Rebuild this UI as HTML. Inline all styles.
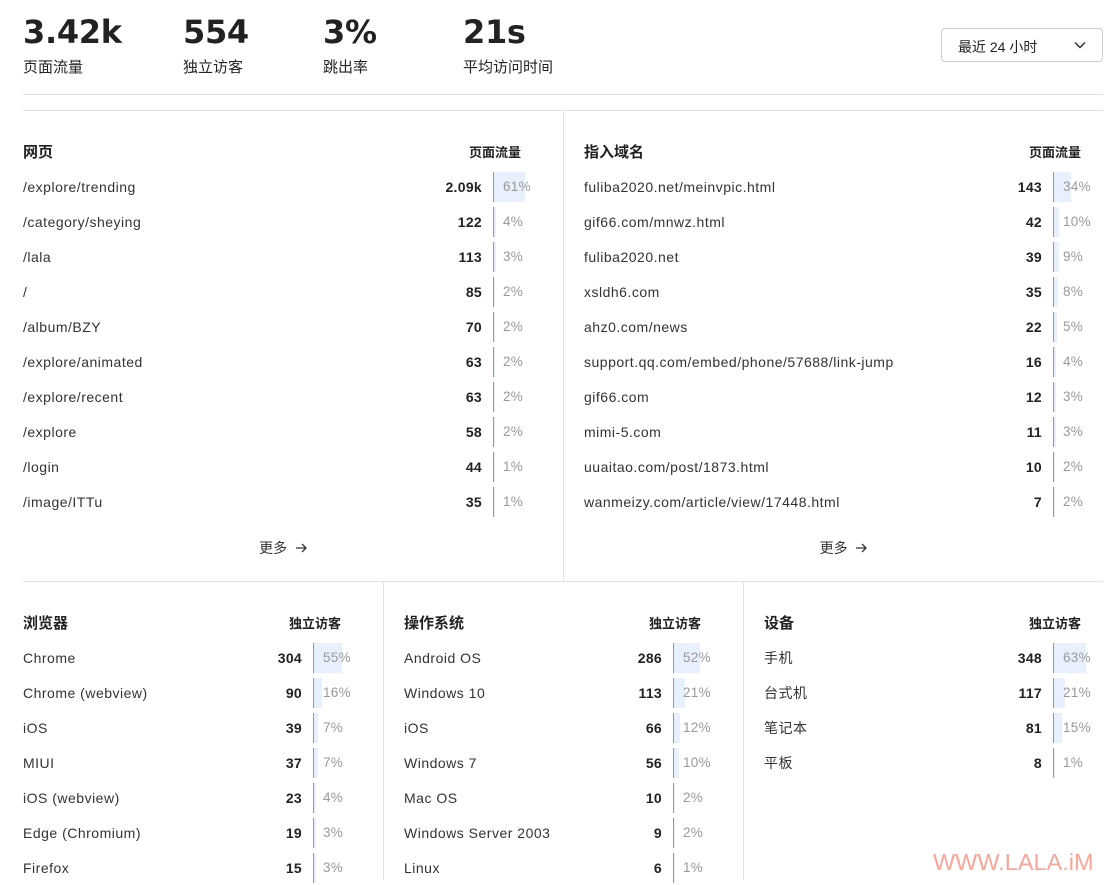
<!DOCTYPE html>
<html><head><meta charset="utf-8"><style>
*{box-sizing:border-box;margin:0;padding:0}
body{width:1109px;height:880px;overflow:hidden;background:#fff;font-family:"Liberation Sans","Noto Sans CJK SC",sans-serif;color:#333;position:relative}
.stat{position:absolute;top:10px}
.stat .v{font-family:"DejaVu Sans",sans-serif;font-size:32px;font-weight:bold;color:#222;line-height:44px;letter-spacing:-0.3px}
.stat .l{font-size:15px;color:#222;margin-top:2px}
.dd{position:absolute;left:941px;top:28px;width:162px;height:34px;border:1px solid #ccc;border-radius:4px;font-size:14px;color:#222;padding:8px 16px}
.dd svg{position:absolute;right:16px;top:12px}
.hr{position:absolute;left:23px;right:6px;height:1px;background:#e2e2e2}
.panel{position:absolute}
.panel h3{display:flex;font-size:15px;font-weight:bold;color:#222;height:20px;line-height:20px;margin-top:1px}
.panel h3 span:first-child{flex:1}
.panel h3 span:last-child{font-size:13px;margin-right:22px}
.row{display:flex;align-items:center;height:35px;font-size:14px;color:#333;letter-spacing:0.5px}
.row .n{flex:1;white-space:nowrap}
.row .c{font-weight:bold;color:#222;margin-right:11px;letter-spacing:0.3px}
.row .b{width:50px;height:30px;border-left:1px solid #999;position:relative;font-size:13.5px;color:#999;line-height:30px;padding-left:9px;letter-spacing:0.3px}
.row .b i{position:absolute;left:0;top:0;bottom:0;background:#e8f0fd;z-index:0}
.row .b s{position:relative;text-decoration:none}
.more{text-align:center;font-size:14px;color:#333;margin-top:19px}
.wm{position:absolute;left:933px;top:849px;font-size:23.5px;color:#f9a597}
</style></head><body>
<div class="stat" style="left:23px"><div class="v">3.42k</div><div class="l">页面流量</div></div>
<div class="stat" style="left:183px"><div class="v">554</div><div class="l">独立访客</div></div>
<div class="stat" style="left:323px"><div class="v">3%</div><div class="l">跳出率</div></div>
<div class="stat" style="left:463px"><div class="v">21s</div><div class="l">平均访问时间</div></div>
<div class="dd">最近 24 小时<svg width="12" height="8" viewBox="0 0 12 8"><path d="M1 1.5l5 5 5-5" fill="none" stroke="#333" stroke-width="1.5"/></svg></div>
<div class="hr" style="top:94px"></div>
<div class="hr" style="top:110px"></div>
<div class="hr" style="top:581px"></div>
<div style="position:absolute;left:563px;top:111px;width:1px;height:470px;background:#e2e2e2"></div>
<div style="position:absolute;left:383px;top:582px;width:1px;height:298px;background:#e2e2e2"></div>
<div style="position:absolute;left:743px;top:582px;width:1px;height:298px;background:#e2e2e2"></div>
<div id="p1" class="panel" style="left:23px;top:142px;width:520px"></div>
<div id="p2" class="panel" style="left:584px;top:142px;width:519px"></div>
<div id="p3" class="panel" style="left:23px;top:613px;width:340px"></div>
<div id="p4" class="panel" style="left:404px;top:613px;width:319px"></div>
<div id="p5" class="panel" style="left:764px;top:613px;width:339px"></div>
<div class="wm">WWW.LALA.iM</div>
<script>
function build(id,t,h,rows,more){var s='<h3><span>'+t+'</span><span>'+h+'</span></h3><div style="height:6px"></div>';
rows.forEach(function(r){s+='<div class="row"><span class="n">'+r[0]+'</span><span class="c">'+r[1]+'</span><span class="b"><i style="width:'+Math.round(r[2]/2)+'px"></i><s>'+r[2]+'%</s></span></div>'});
if(more)s+='<div class="more">更多 &nbsp;<svg width="12" height="10" viewBox="0 0 12 10"><path d="M1 5h10M7 1l4 4-4 4" fill="none" stroke="#333" stroke-width="1.3"/></svg></div>';
document.getElementById(id).innerHTML=s}
build('p1','网页','页面流量',[['/explore/trending','2.09k',61],['/category/sheying','122',4],['/lala','113',3],['/','85',2],['/album/BZY','70',2],['/explore/animated','63',2],['/explore/recent','63',2],['/explore','58',2],['/login','44',1],['/image/ITTu','35',1]],1);
build('p2','指入域名','页面流量',[['fuliba2020.net/meinvpic.html','143',34],['gif66.com/mnwz.html','42',10],['fuliba2020.net','39',9],['xsldh6.com','35',8],['ahz0.com/news','22',5],['support.qq.com/embed/phone/57688/link-jump','16',4],['gif66.com','12',3],['mimi-5.com','11',3],['uuaitao.com/post/1873.html','10',2],['wanmeizy.com/article/view/17448.html','7',2]],1);
build('p3','浏览器','独立访客',[['Chrome','304',55],['Chrome (webview)','90',16],['iOS','39',7],['MIUI','37',7],['iOS (webview)','23',4],['Edge (Chromium)','19',3],['Firefox','15',3]]);
build('p4','操作系统','独立访客',[['Android OS','286',52],['Windows 10','113',21],['iOS','66',12],['Windows 7','56',10],['Mac OS','10',2],['Windows Server 2003','9',2],['Linux','6',1]]);
build('p5','设备','独立访客',[['手机','348',63],['台式机','117',21],['笔记本','81',15],['平板','8',1]]);
</script>
</body></html>
